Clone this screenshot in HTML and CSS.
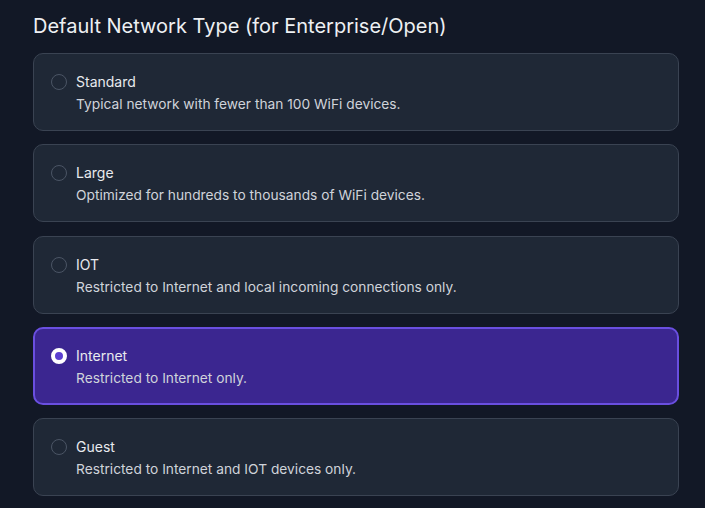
FILE: index.html
```html
<!DOCTYPE html>
<html>
<head>
<meta charset="utf-8">
<link rel="stylesheet" href="styles.css">
</head>
<body>
<div class="page">
  <h2 class="title">Default Network Type (for Enterprise/Open)</h2>
  <div class="options">
    <label class="option">
      <span class="radio"></span>
      <span class="text"><span class="name">Standard</span><span class="desc">Typical network with fewer than 100 WiFi devices.</span></span>
    </label>
    <label class="option">
      <span class="radio"></span>
      <span class="text"><span class="name">Large</span><span class="desc">Optimized for hundreds to thousands of WiFi devices.</span></span>
    </label>
    <label class="option">
      <span class="radio"></span>
      <span class="text"><span class="name">IOT</span><span class="desc">Restricted to Internet and local incoming connections only.</span></span>
    </label>
    <label class="option selected">
      <span class="radio"></span>
      <span class="text"><span class="name">Internet</span><span class="desc">Restricted to Internet only.</span></span>
    </label>
    <label class="option">
      <span class="radio"></span>
      <span class="text"><span class="name">Guest</span><span class="desc">Restricted to Internet and IOT devices only.</span></span>
    </label>
  </div>
</div>
</body>
</html>
```
FILE: styles.css
```css
html, body {
  margin: 0;
  padding: 0;
  background: #121826;
}
body {
  font-family: Inter, "Noto Sans", sans-serif;
  color: #e5e7eb;
}
.page {
  padding: 12px 26px 0 33px;
}
.title {
  margin: 0 0 13px 0;
  font-size: 20px;
  font-weight: 400;
  line-height: 28px;
  color: #eef0f3;
}
.options {
  display: flex;
  flex-direction: column;
  gap: 13.25px;
}
.option {
  display: flex;
  align-items: flex-start;
  gap: 9px;
  height: 78px;
  box-sizing: border-box;
  padding: 18px 17px 0 17px;
  background: #1f2836;
  border: 1px solid #3a4352;
  border-radius: 10px;
}
.radio {
  flex: none;
  width: 16px;
  height: 16px;
  box-sizing: border-box;
  margin-top: 2px;
  border: 1px solid #4b5565;
  border-radius: 50%;
}
.text {
  display: flex;
  flex-direction: column;
}
.name {
  font-size: 14px;
  line-height: 20px;
  color: #e8eaee;
}
.desc {
  font-size: 13.75px;
  line-height: 24px;
  color: #cfd3da;
}
.option.selected {
  background: #3b2690;
  border: 2px solid #6a4fe0;
  padding: 17px 16px 0 16px;
}
.option.selected .radio {
  border: 4px solid #ffffff;
  background: #5b3fd0;
}
```
